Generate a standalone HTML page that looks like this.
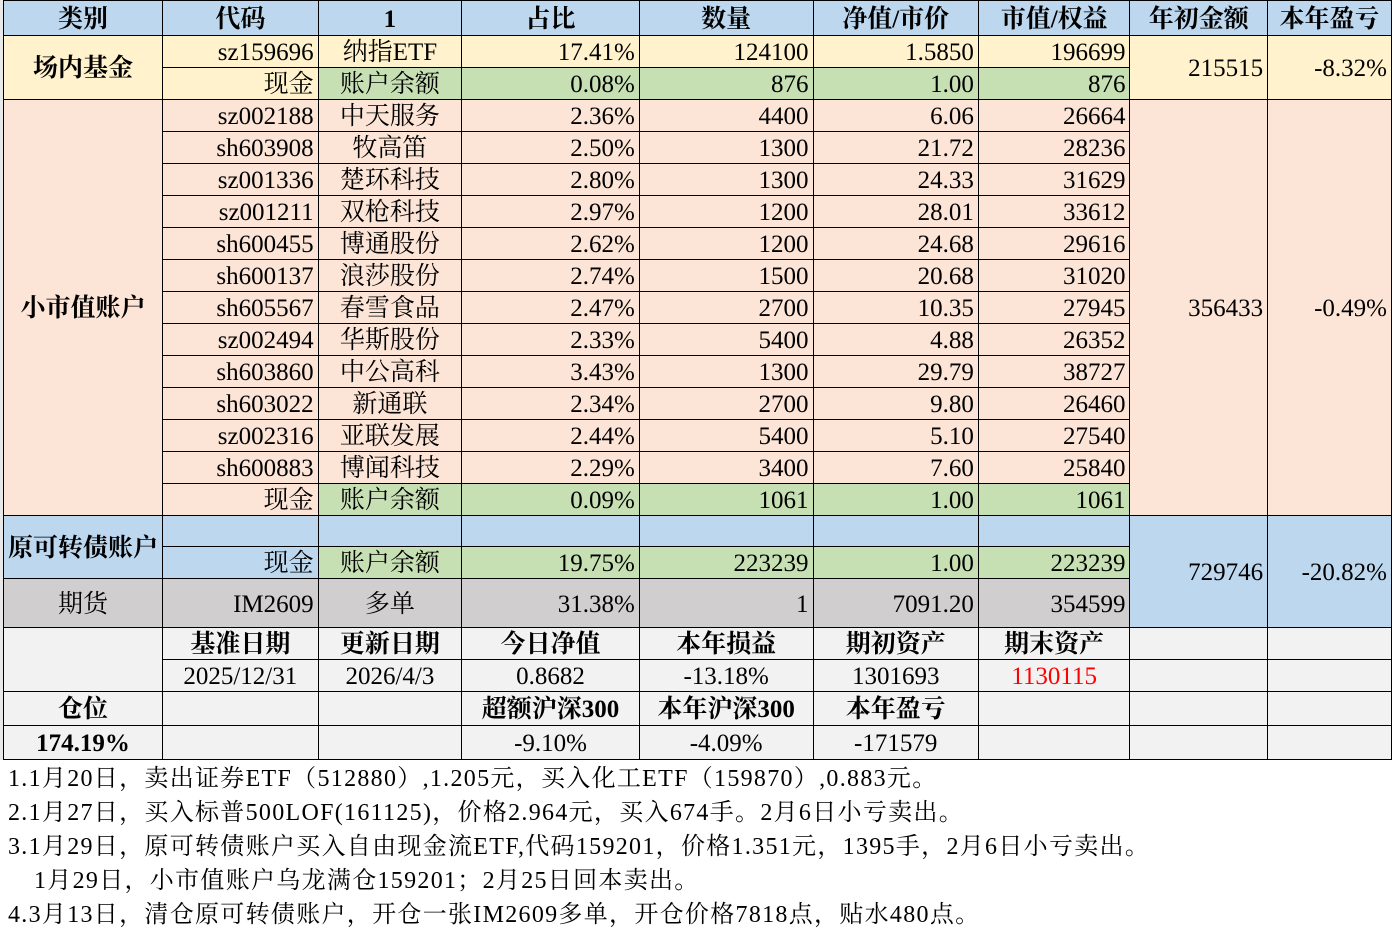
<!DOCTYPE html>
<html><head><meta charset="utf-8"><style>
html,body{margin:0;padding:0;background:#fff;width:1392px;height:946px;overflow:hidden}
body{font-family:"Liberation Serif","Noto Serif CJK SC",serif;font-size:25px;color:#000;position:relative}
.strip{position:absolute;left:0;top:0;width:3px;height:760px;background:#e8e8e8}
table{position:absolute;left:3px;top:0;border-collapse:collapse;table-layout:fixed}
td{border:1px solid #000;padding:2px 4px 0 4px;white-space:nowrap;overflow:hidden;line-height:1;text-align:right}
.c{text-align:center}.b{font-weight:bold;font-family:"Liberation Serif","Noto Serif CJK SC",serif}
.h td{background:#BDD7EE;font-weight:bold;text-align:center;font-family:"Liberation Serif","Noto Serif CJK SC",serif}
.y{background:#FFF2CC}.s{background:#FCE4D6}.g{background:#C6E0B4}.bl{background:#BDD7EE}.gr{background:#D0CECE}.l{background:#F2F2F2}
.red{color:#f00}
.notes{position:absolute;left:8px;top:762px;line-height:34px;font-size:24px;letter-spacing:1.3px;font-family:"Liberation Serif","Noto Serif CJK SC",serif}
</style></head><body>
<div class="strip"></div>
<table>
<colgroup><col style="width:157px"><col style="width:156px"><col style="width:144px"><col style="width:178px"><col style="width:174px"><col style="width:166px"><col style="width:152px"><col style="width:138px"><col style="width:124px"></colgroup>
<tr class="h" style="height:35px"><td>类别</td><td>代码</td><td>1</td><td>占比</td><td>数量</td><td>净值/市价</td><td>市值/权益</td><td>年初金额</td><td>本年盈亏</td></tr>
<tr style="height:32px"><td class="y c b" rowspan="2">场内基金</td><td class="y">sz159696</td><td class="y c">纳指ETF</td><td class="y">17.41%</td><td class="y">124100</td><td class="y">1.5850</td><td class="y">196699</td><td class="y" rowspan="2">215515</td><td class="y" rowspan="2">-8.32%</td></tr>
<tr style="height:32px"><td class="y">现金</td><td class="g c">账户余额</td><td class="g">0.08%</td><td class="g">876</td><td class="g">1.00</td><td class="g">876</td></tr>
<tr style="height:32px"><td class="s c b" rowspan="13">小市值账户</td><td class="s">sz002188</td><td class="s c">中天服务</td><td class="s">2.36%</td><td class="s">4400</td><td class="s">6.06</td><td class="s">26664</td><td class="s" rowspan="13">356433</td><td class="s" rowspan="13">-0.49%</td></tr>
<tr style="height:32px"><td class="s">sh603908</td><td class="s c">牧高笛</td><td class="s">2.50%</td><td class="s">1300</td><td class="s">21.72</td><td class="s">28236</td></tr>
<tr style="height:32px"><td class="s">sz001336</td><td class="s c">楚环科技</td><td class="s">2.80%</td><td class="s">1300</td><td class="s">24.33</td><td class="s">31629</td></tr>
<tr style="height:32px"><td class="s">sz001211</td><td class="s c">双枪科技</td><td class="s">2.97%</td><td class="s">1200</td><td class="s">28.01</td><td class="s">33612</td></tr>
<tr style="height:32px"><td class="s">sh600455</td><td class="s c">博通股份</td><td class="s">2.62%</td><td class="s">1200</td><td class="s">24.68</td><td class="s">29616</td></tr>
<tr style="height:32px"><td class="s">sh600137</td><td class="s c">浪莎股份</td><td class="s">2.74%</td><td class="s">1500</td><td class="s">20.68</td><td class="s">31020</td></tr>
<tr style="height:32px"><td class="s">sh605567</td><td class="s c">春雪食品</td><td class="s">2.47%</td><td class="s">2700</td><td class="s">10.35</td><td class="s">27945</td></tr>
<tr style="height:32px"><td class="s">sz002494</td><td class="s c">华斯股份</td><td class="s">2.33%</td><td class="s">5400</td><td class="s">4.88</td><td class="s">26352</td></tr>
<tr style="height:32px"><td class="s">sh603860</td><td class="s c">中公高科</td><td class="s">3.43%</td><td class="s">1300</td><td class="s">29.79</td><td class="s">38727</td></tr>
<tr style="height:32px"><td class="s">sh603022</td><td class="s c">新通联</td><td class="s">2.34%</td><td class="s">2700</td><td class="s">9.80</td><td class="s">26460</td></tr>
<tr style="height:32px"><td class="s">sz002316</td><td class="s c">亚联发展</td><td class="s">2.44%</td><td class="s">5400</td><td class="s">5.10</td><td class="s">27540</td></tr>
<tr style="height:32px"><td class="s">sh600883</td><td class="s c">博闻科技</td><td class="s">2.29%</td><td class="s">3400</td><td class="s">7.60</td><td class="s">25840</td></tr>
<tr style="height:32px"><td class="s">现金</td><td class="g c">账户余额</td><td class="g">0.09%</td><td class="g">1061</td><td class="g">1.00</td><td class="g">1061</td></tr>
<tr style="height:31px"><td class="bl c b" rowspan="2">原可转债账户</td><td class="bl"></td><td class="bl"></td><td class="bl"></td><td class="bl"></td><td class="bl"></td><td class="bl"></td><td class="bl" rowspan="3">729746</td><td class="bl" rowspan="3">-20.82%</td></tr>
<tr style="height:32px"><td class="bl">现金</td><td class="g c">账户余额</td><td class="g">19.75%</td><td class="g">223239</td><td class="g">1.00</td><td class="g">223239</td></tr>
<tr style="height:49px"><td class="gr c">期货</td><td class="gr">IM2609</td><td class="gr c">多单</td><td class="gr">31.38%</td><td class="gr">1</td><td class="gr">7091.20</td><td class="gr">354599</td></tr>
<tr style="height:32px"><td class="l" rowspan="2"></td><td class="l c b">基准日期</td><td class="l c b">更新日期</td><td class="l c b">今日净值</td><td class="l c b">本年损益</td><td class="l c b">期初资产</td><td class="l c b">期末资产</td><td class="l"></td><td class="l"></td></tr>
<tr style="height:32px"><td class="l c">2025/12/31</td><td class="l c">2026/4/3</td><td class="l c">0.8682</td><td class="l c">-13.18%</td><td class="l c">1301693</td><td class="l c red">1130115</td><td class="l"></td><td class="l"></td></tr>
<tr style="height:34px"><td class="l c b">仓位</td><td class="l"></td><td class="l"></td><td class="l c b">超额沪深300</td><td class="l c b">本年沪深300</td><td class="l c b">本年盈亏</td><td class="l"></td><td class="l"></td><td class="l"></td></tr>
<tr style="height:34px"><td class="l c b">174.19%</td><td class="l"></td><td class="l"></td><td class="l c">-9.10%</td><td class="l c">-4.09%</td><td class="l c">-171579</td><td class="l"></td><td class="l"></td><td class="l"></td></tr>
</table>
<div class="notes">
<div>1.1月20日，卖出证券ETF（512880）,1.205元，买入化工ETF（159870）,0.883元。</div>
<div>2.1月27日，买入标普500LOF(161125)，价格2.964元，买入674手。2月6日小亏卖出。</div>
<div>3.1月29日，原可转债账户买入自由现金流ETF,代码159201，价格1.351元，1395手，2月6日小亏卖出。</div>
<div style="padding-left:26px">1月29日，小市值账户乌龙满仓159201；2月25日回本卖出。</div>
<div>4.3月13日，清仓原可转债账户，开仓一张IM2609多单，开仓价格7818点，贴水480点。</div>
</div>
</body></html>
